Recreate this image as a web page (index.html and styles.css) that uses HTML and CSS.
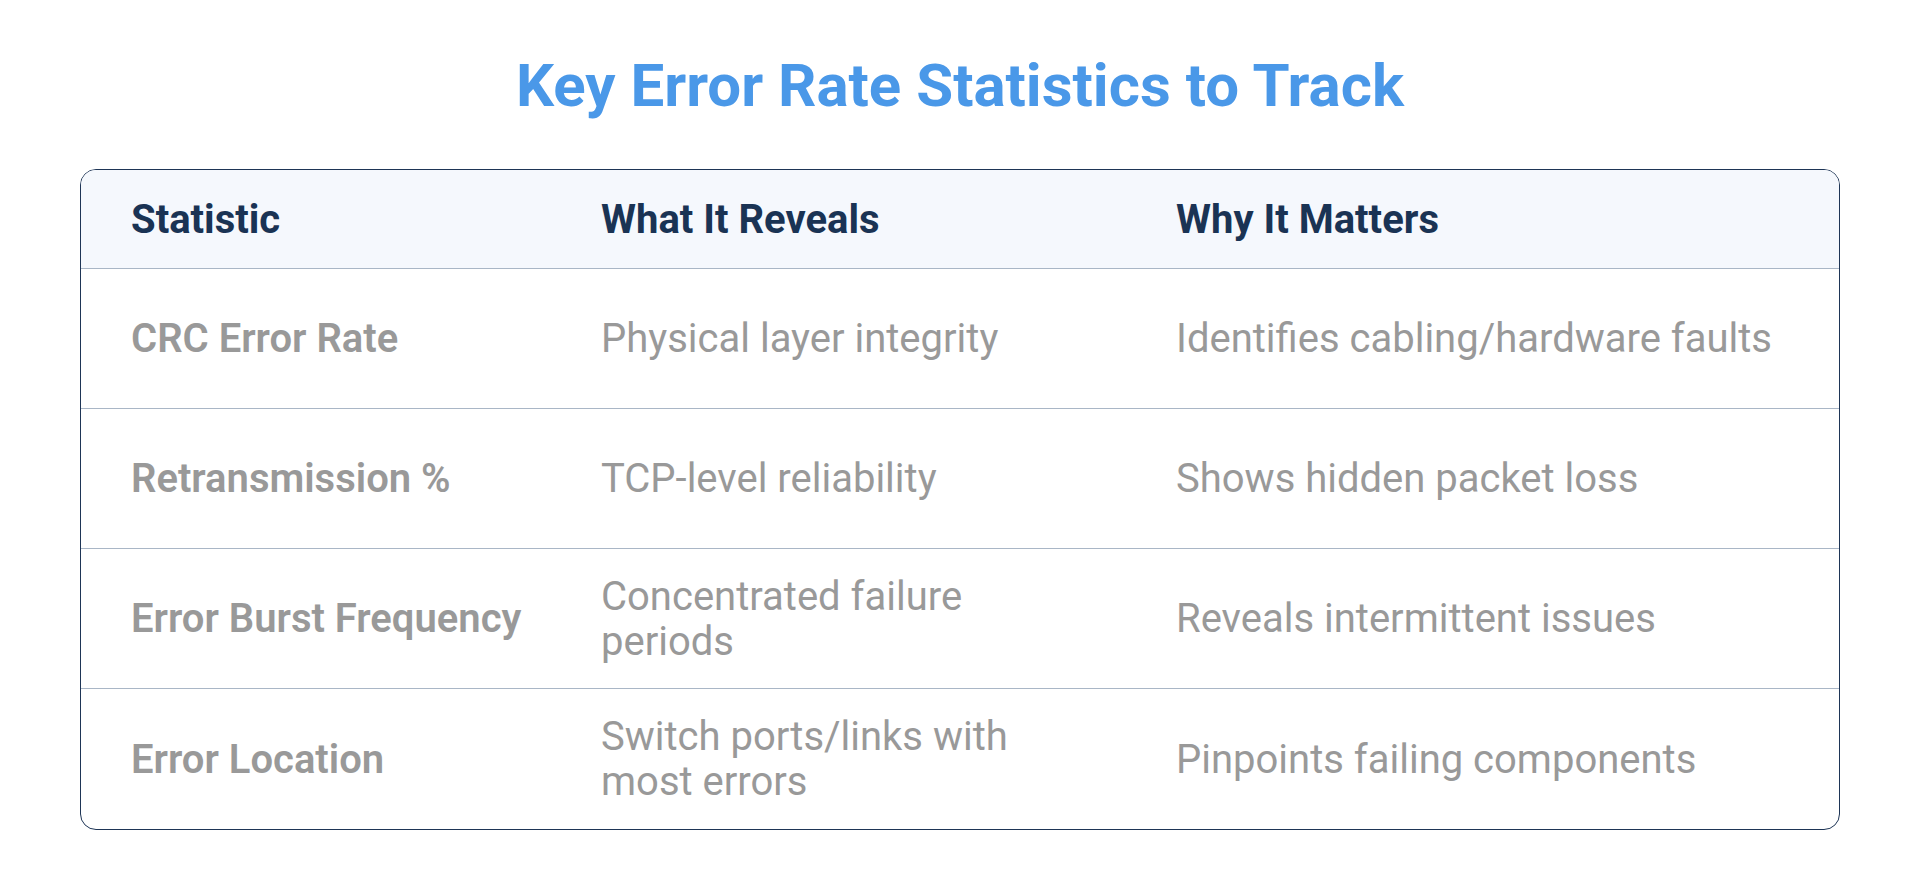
FILE: index.html
```html
<!DOCTYPE html>
<html>
<head>
<meta charset="utf-8">
<link rel="stylesheet" href="styles.css">
</head>
<body>
<main class="page">
  <h1 class="title">Key Error Rate Statistics to Track</h1>
  <div class="table">
    <div class="row head">
      <div class="cell">Statistic</div>
      <div class="cell">What It Reveals</div>
      <div class="cell">Why It Matters</div>
    </div>
    <div class="row">
      <div class="cell name">CRC Error Rate</div>
      <div class="cell">Physical layer integrity</div>
      <div class="cell">Identifies cabling/hardware faults</div>
    </div>
    <div class="row">
      <div class="cell name">Retransmission %</div>
      <div class="cell">TCP-level reliability</div>
      <div class="cell">Shows hidden packet loss</div>
    </div>
    <div class="row">
      <div class="cell name">Error Burst Frequency</div>
      <div class="cell">Concentrated failure<br>periods</div>
      <div class="cell">Reveals intermittent issues</div>
    </div>
    <div class="row last">
      <div class="cell name">Error Location</div>
      <div class="cell">Switch ports/links with<br>most errors</div>
      <div class="cell">Pinpoints failing components</div>
    </div>
  </div>
</main>
</body>
</html>
```
FILE: styles.css
```css
html, body {
  margin: 0;
  padding: 0;
  background: #ffffff;
}
body {
  font-family: Roboto, "Liberation Sans", sans-serif;
}
.page {
  width: 1920px;
  height: 888px;
  box-sizing: border-box;
  padding: 0 80px;
  display: flex;
  flex-direction: column;
}
.title {
  margin: 0;
  height: 169px;
  box-sizing: border-box;
  padding-top: 46px;
  text-align: center;
  font-size: 60px;
  font-weight: 700;
  line-height: 80px;
  color: #4a98e8;
}
.table {
  border: 1.5px solid #1e3556;
  border-radius: 16px;
  overflow: hidden;
  display: flex;
  flex-direction: column;
}
.row {
  display: grid;
  grid-template-columns: 470px 575px 1fr;
  box-sizing: border-box;
  height: 140px;
  align-items: center;
  border-bottom: 1px solid #a9b6c6;
}
.row.last {
  border-bottom: none;
}
.row.head {
  height: 99px;
  background: #f5f8fd;
  font-weight: 700;
  color: #1a3354;
}
.cell {
  padding-left: 50px;
  font-size: 40px;
  line-height: 45px;
  color: #999999;
}
.head .cell {
  color: #1a3354;
}
.cell.name {
  font-weight: 600;
}
```
